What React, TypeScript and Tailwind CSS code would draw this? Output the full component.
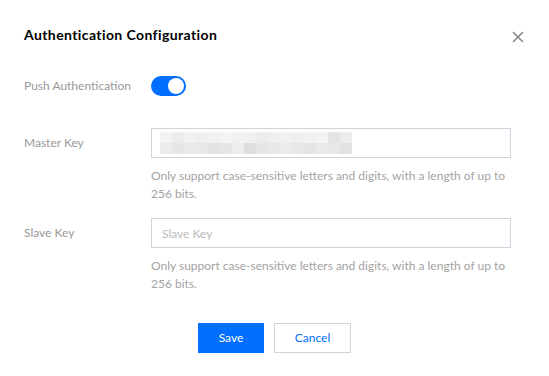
import { useState } from 'react';

const blurRows = [
  ['#f3f3f3', '#ececec', '#f1f1f1', '#efefef', '#f2f2f2', '#f4f4f4', '#f2f2f2', '#f0f0f0', '#ececec', '#efefef', '#f1f1f1', '#efefef', '#f1f1f1', '#f3f3f3', '#e4e4e4', '#ececec'],
  ['#ebebeb', '#e6e6e6', '#e9e9e9', '#e8e8e8', '#e2e2e2', '#e6e6e6', '#ededed', '#dedede', '#e6e6e6', '#e8e8e8', '#ebebeb', '#e7e7e7', '#e4e4e4', '#e9e9e9', '#e8e8e8', '#e2e2e2']
];

const HelpText = () => (
  <div className="mt-[9px] text-xs leading-[18px] text-[#a3a3a3]">
    <div className="whitespace-nowrap">Only support case-sensitive letters and digits, with a length of up to</div>
    <div>256 bits.</div>
  </div>
);

export default function App() {
  const [push, setPush] = useState(true);

  return (
    <div
      className="w-[549px] h-[376px] bg-white text-[#999]"
      style={{ fontFamily: 'Lato, "Noto Sans", sans-serif' }}
    >
      <div className="flex items-start justify-between pl-6 pr-[25px] pt-[25px]">
        <div className="text-[14px] leading-5 font-bold tracking-[0.4px] text-black">Authentication Configuration</div>
        <svg width="12" height="12" viewBox="0 0 12 12" className="mt-[6px]">
          <path d="M1 1L11 11M11 1L1 11" stroke="#888" strokeWidth="1.6" />
        </svg>
      </div>

      <div className="pl-6 mt-[31px]">
        <div className="flex items-center h-5">
          <div className="w-[127px] text-xs">Push Authentication</div>
          <button
            onClick={() => setPush(!push)}
            className={`relative w-[35px] h-5 rounded-full ${push ? 'bg-[#006eff]' : 'bg-[#ccc]'}`}
          >
            <span
              className={`absolute top-[2px] w-4 h-4 rounded-full bg-white ${push ? 'right-[2px]' : 'left-[2px]'}`}
            />
          </button>
        </div>

        <div className="flex mt-8">
          <div className="w-[127px] text-xs leading-[30px]">Master Key</div>
          <div className="w-[360px]">
            <div className="h-[30px] border border-[#cfd5de] flex items-center pl-2">
              <div className="flex flex-col blur-[0.6px]">
                {blurRows.map((row, i) => (
                  <div key={i} className="flex">
                    {row.map((c, j) => (
                      <div key={j} className="w-3 h-[11px]" style={{ background: c }} />
                    ))}
                  </div>
                ))}
              </div>
            </div>
            <HelpText />
          </div>
        </div>

        <div className="flex mt-[15px]">
          <div className="w-[127px] text-xs leading-[30px]">Slave Key</div>
          <div className="w-[360px]">
            <input
              placeholder="Slave Key"
              className="w-full h-[30px] border border-[#cfd5de] px-[10px] text-xs text-[#333] placeholder:text-[#bbb] outline-none"
            />
            <HelpText />
          </div>
        </div>
      </div>

      <div className="flex justify-center gap-[10px] mt-[30px]">
        <button className="w-[66px] h-[30px] bg-[#006eff] text-white text-xs">Save</button>
        <button className="w-[77px] h-[30px] border border-[#cfd5de] bg-white text-[#006eff] text-xs">Cancel</button>
      </div>
    </div>
  );
}
